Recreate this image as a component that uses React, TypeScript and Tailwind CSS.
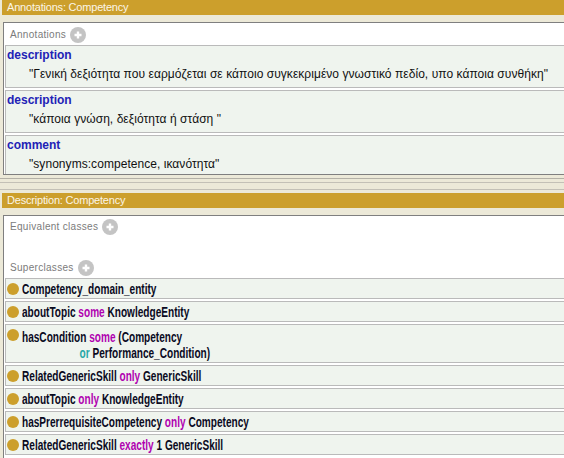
import React from 'react';

const annotations = [
  { label: 'description', value: '"Γενική δεξιότητα που εαρμόζεται σε κάποιο συγκεκριμένο γνωστικό πεδίο, υπο κάποια συνθήκη"' },
  { label: 'description', value: '"κάποια γνώση, δεξιότητα ή στάση "' },
  { label: 'comment', value: '"synonyms:competence, ικανότητα"' },
];

type Part = { t: string; k?: 'kw' | 'or' };

// each superclass row is a list of lines, each line a list of parts
const superclasses: Part[][][] = [
  [[{ t: 'Competency_domain_entity' }]],
  [[{ t: 'aboutTopic ' }, { t: 'some', k: 'kw' }, { t: ' KnowledgeEntity' }]],
  [
    [{ t: 'hasCondition ' }, { t: 'some', k: 'kw' }, { t: ' (Competency' }],
    [{ t: 'or', k: 'or' }, { t: ' Performance_Condition)' }],
  ],
  [[{ t: 'RelatedGenericSkill ' }, { t: 'only', k: 'kw' }, { t: ' GenericSkill' }]],
  [[{ t: 'aboutTopic ' }, { t: 'only', k: 'kw' }, { t: ' KnowledgeEntity' }]],
  [[{ t: 'hasPrerrequisiteCompetency ' }, { t: 'only', k: 'kw' }, { t: ' Competency' }]],
  [[{ t: 'RelatedGenericSkill ' }, { t: 'exactly', k: 'kw' }, { t: ' 1 GenericSkill' }]],
];

function PlusButton() {
  return (
    <span className="inline-flex w-[16px] h-[16px] rounded-full bg-[#c4c4c4] items-center justify-center ml-[4px] mt-[2px]">
      <svg width="10" height="10" viewBox="0 0 10 10">
        <path d="M5 1.5v7M1.5 5h7" stroke="#ffffff" strokeWidth="2.4" />
      </svg>
    </span>
  );
}

function SectionLabel({ text }: { text: string }) {
  return (
    <div className="flex items-center pl-[6px] text-[10px] tracking-[0.3px] text-[#7b7b7b]">
      <span>{text}</span>
      <PlusButton />
    </div>
  );
}

function TitleBar({ text }: { text: string }) {
  return (
    <div className="ml-[2px] h-[15px] bg-[#cc9f2c] text-[#fbf6e8] text-[11px] tracking-[-0.2px] leading-[15px] pl-[5px]">
      {text}
    </div>
  );
}

export default function App() {
  return (
    <div className="w-[564px] h-[458px] overflow-hidden bg-[#ece9d8] font-['Liberation_Sans',Arial,sans-serif]">
      {/* Annotations view */}
      <TitleBar text="Annotations: Competency" />
      <div className="h-[7px]" />
      <div className="ml-[3px] w-[600px] h-[153px] overflow-hidden bg-white border-t border-b border-l border-[#7f7f7f]">
        <div className="h-[22px] flex items-center">
          <SectionLabel text="Annotations" />
        </div>
        <div className="flex flex-col gap-[2px] ml-[1px]">
          {annotations.map((a, i) => (
            <div key={i} className="h-[43px] shrink-0 bg-[#eff4ee] border-t border-b border-l border-[#bababa]">
              <div className="h-[19px] leading-[19px] pl-[1px] text-[12px] font-bold text-[#2222b6]">{a.label}</div>
              <div className="h-[19px] leading-[19px] pl-[23px] text-[12px] tracking-[0.05px] text-[#111111] whitespace-nowrap">{a.value}</div>
            </div>
          ))}
        </div>
      </div>

      {/* splitter */}
      <div className="h-[18px] flex flex-col">
        <div className="h-[3px]" />
        <div className="h-px bg-[#b3b0a6]" />
        <div className="h-[3px]" />
        <div className="h-px bg-[#c3c0b6]" />
        <div className="h-[6px]" />
        <div className="h-px bg-[#c3c0b6]" />
      </div>

      {/* Description view */}
      <TitleBar text="Description: Competency" />
      <div className="h-[7px]" />
      <div className="ml-[3px] w-[600px] h-[260px] bg-white border-t border-l border-[#7f7f7f]">
        <div className="h-[20px] flex items-center">
          <SectionLabel text="Equivalent classes" />
        </div>
        <div className="h-[20px]" />
        <div className="h-[22px] flex items-center">
          <SectionLabel text="Superclasses" />
        </div>
        <div className="flex flex-col gap-[2px] ml-[1px]">
          {superclasses.map((lines, i) => (
            <div
              key={i}
              className={
                lines.length > 1
                  ? 'bg-[#eff4ee] border-t border-b border-l border-[#bababa] pt-[3px] pb-[1px] flex items-start'
                  : 'bg-[#eff4ee] border-t border-b border-l border-[#bababa] h-[21px] pt-[1px] flex items-start'
              }
            >
              <span className={lines.length > 1 ? 'w-[12px] h-[12px] rounded-full bg-[#cc9f2c] mt-[1px] ml-[1px] shrink-0' : 'w-[12px] h-[12px] rounded-full bg-[#cc9f2c] mt-[3px] ml-[1px] shrink-0'} />
              <div className="ml-[3px] flex flex-col origin-left scale-x-[0.72] font-bold text-[14px] leading-[16px] text-[#0a0a1e] pt-[1px]">
                {lines.map((line, j) => (
                  <div key={j} className={j > 0 ? 'pl-[80px] whitespace-nowrap' : 'whitespace-nowrap'}>
                    {line.map((p, m) => (
                      <span
                        key={m}
                        className={p.k === 'kw' ? 'text-[#b000b0]' : p.k === 'or' ? 'text-[#27a7a7]' : ''}
                      >
                        {p.t}
                      </span>
                    ))}
                  </div>
                ))}
              </div>
            </div>
          ))}
        </div>
      </div>
    </div>
  );
}
